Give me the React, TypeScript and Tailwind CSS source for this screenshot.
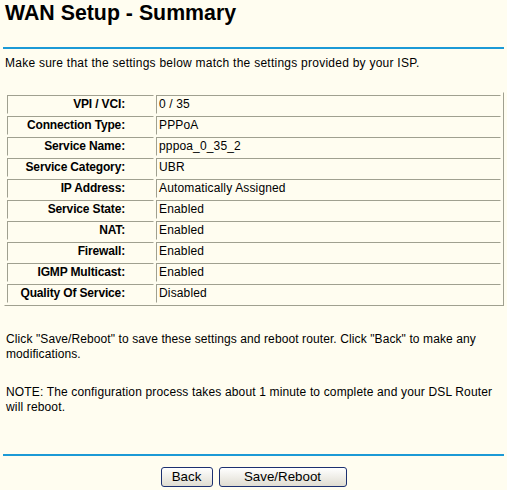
import React from "react";

const rows: [string, string][] = [
  ["VPI / VCI:", "0 / 35"],
  ["Connection Type:", "PPPoA"],
  ["Service Name:", "pppoa_0_35_2"],
  ["Service Category:", "UBR"],
  ["IP Address:", "Automatically Assigned"],
  ["Service State:", "Enabled"],
  ["NAT:", "Enabled"],
  ["Firewall:", "Enabled"],
  ["IGMP Multicast:", "Enabled"],
  ["Quality Of Service:", "Disabled"],
];

export default function App() {
  return (
    <div
      className="w-[507px] h-[490px] overflow-hidden bg-[#fffdf0] text-black text-[12px]"
      style={{ fontFamily: '"Liberation Sans", Arial, sans-serif' }}
    >
      <div className="pl-[5px] h-[26px] leading-[26px] text-[21.33px] font-bold">
        WAN Setup - Summary
      </div>
      <div className="mt-[21px] ml-[3px] w-[501px] h-[2px] bg-[#1c9ad6]" />
      <div className="mt-[7px] pl-[5px] leading-[14px] tracking-[0.25px]">
        Make sure that the settings below match the settings provided by your ISP.
      </div>
      <div className="mt-[22px] ml-[4px] w-[500px] border border-t-[#fffdf0] border-l-[#fffdf0] border-b-[#a0a090] border-r-[#a0a090] p-[2px] flex flex-col gap-[2px]">
        {rows.map(([k, v]) => (
          <div key={k} className="flex gap-[2px] h-[19px]">
            <div className="w-[147px] h-[19px] border border-t-[#a0a090] border-l-[#a0a090] border-b-[#fffdf0] border-r-[#fffdf0] text-right pr-[28px] font-bold leading-[17px] tracking-[-0.15px]">
              {k}
            </div>
            <div className="w-[345px] h-[19px] border border-t-[#a0a090] border-l-[#a0a090] border-b-[#fffdf0] border-r-[#fffdf0] pl-[2px] leading-[17px] tracking-[0.15px]">
              {v}
            </div>
          </div>
        ))}
      </div>
      <div className="mt-[26px] pl-[6px] w-[496px] leading-[15px] tracking-[0.1px]">
        Click "Save/Reboot" to save these settings and reboot router. Click "Back" to make any modifications.
      </div>
      <div className="mt-[23px] pl-[6px] w-[496px] leading-[15px] tracking-[0.15px]">
        NOTE: The configuration process takes about 1 minute to complete and your DSL Router will reboot.
      </div>
      <div className="mt-[39px] ml-[3px] w-[501px] h-[2px] bg-[#1c9ad6]" />
      <div className="mt-[11px] flex justify-center gap-[6px]">
        <button className="w-[52px] h-[20px] rounded-[3px] border border-[#1c3070] bg-gradient-to-b from-white to-[#e0ddd2] text-[13.33px] leading-[18px] text-black">
          Back
        </button>
        <button className="w-[128px] h-[20px] rounded-[3px] border border-[#1c3070] bg-gradient-to-b from-white to-[#e0ddd2] text-[13.33px] leading-[18px] text-black">
          Save/Reboot
        </button>
      </div>
    </div>
  );
}
